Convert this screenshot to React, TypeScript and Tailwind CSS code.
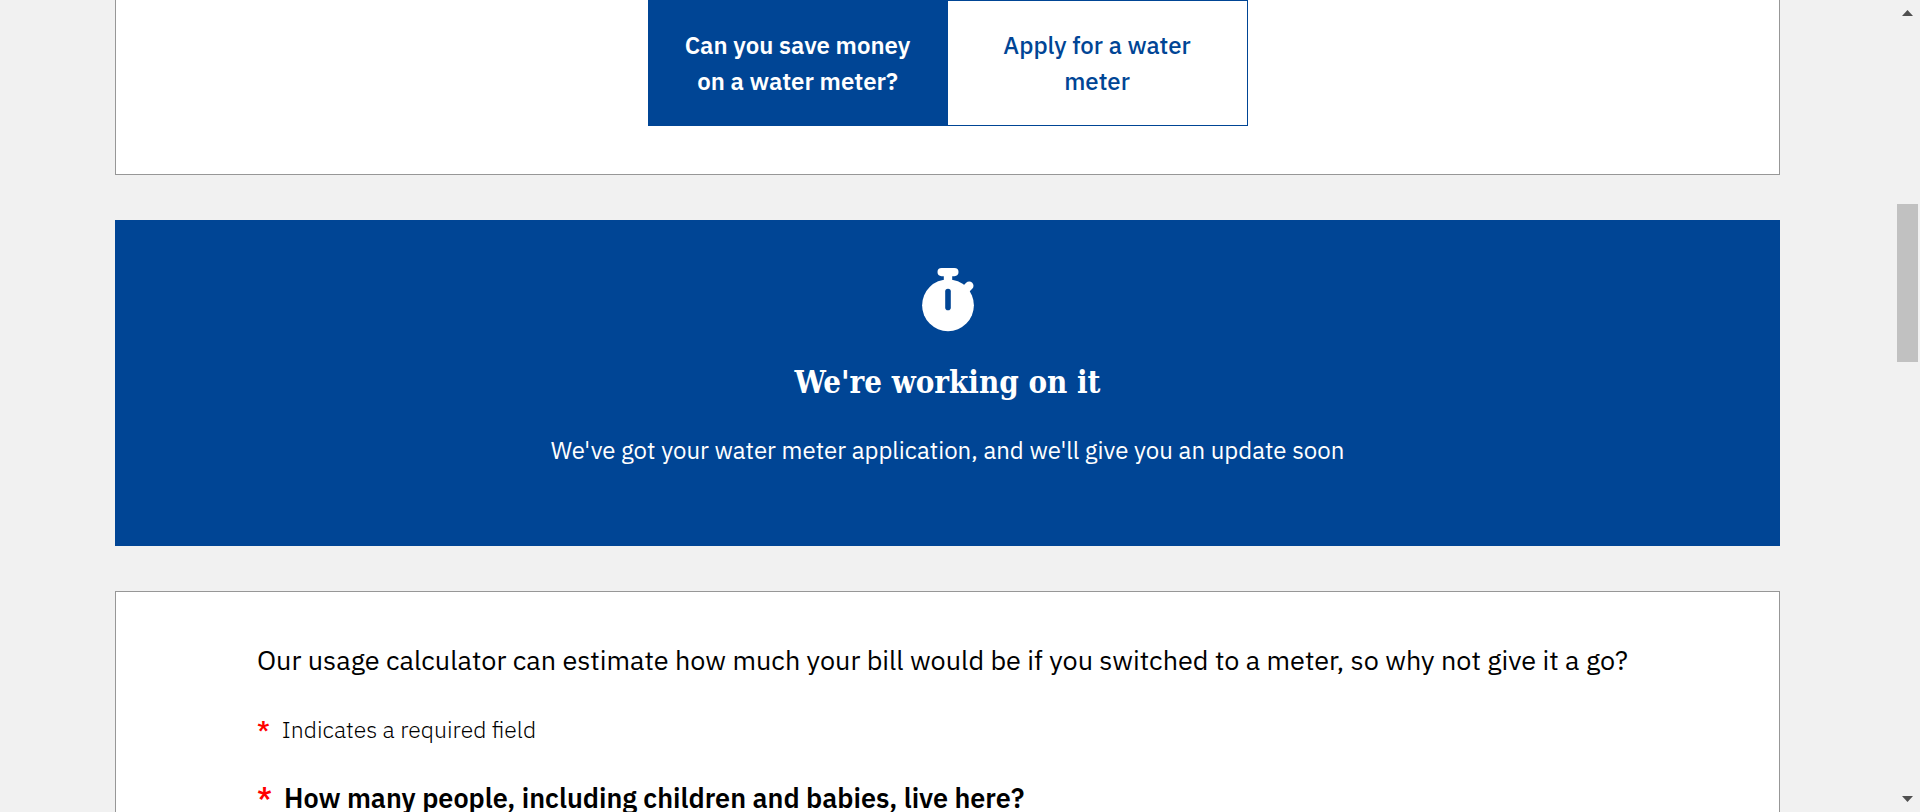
import React from "react";

function Stopwatch() {
  return (
    <svg viewBox="0 0 52 64" className="h-16 w-13" fill="#fff" aria-hidden="true">
      <rect x="15.5" y="0" width="21" height="8.2" rx="4.1" />
      <rect x="21.8" y="5" width="8.4" height="10" />
      <path d="M40 25 47.2 17.8" stroke="#fff" strokeWidth="8.6" strokeLinecap="round" />
      <circle cx="26" cy="37.3" r="25.9" />
      <rect x="23.2" y="20.7" width="5.6" height="21.5" rx="2.8" fill="#004595" />
    </svg>
  );
}

function Required() {
  return <span className="mr-3 font-semibold text-[#ff0000]">*</span>;
}

export default function App() {
  return (
    <div className="flex h-screen overflow-hidden bg-[#f1f1f1] font-['IBM_Plex_Sans',Roboto,'Liberation_Sans',sans-serif] text-black">
      <main className="flex min-w-0 flex-1 flex-col gap-[45px] px-[115px]">
        <section className="shrink-0 border border-t-0 border-[#979797] bg-white pb-12">
          <div className="mx-auto grid max-w-[600px] grid-cols-2 text-2xl leading-9">
            <button type="button" className="border border-[#004595] bg-[#004595] px-8 py-[26px] font-semibold text-white">
              Can you save money on a water meter?
            </button>
            <button type="button" className="border border-l-0 border-[#004595] bg-white px-8 py-[26px] font-medium text-[#004595]">
              Apply for a water meter
            </button>
          </div>
        </section>

        <section className="flex shrink-0 flex-col items-center bg-[#004595] px-8 pt-12 pb-[78px] text-center text-white">
          <Stopwatch />
          <h2 className="mt-7 font-['Roboto_Slab','DejaVu_Serif_Condensed','DejaVu_Serif',serif] text-[31px] leading-[44px] font-bold">
            We're working on it
          </h2>
          <p className="mt-7 text-2xl leading-9">
            We've got your water meter application, and we'll give you an update soon
          </p>
        </section>

        <section className="shrink-0 border border-[#979797] bg-white px-[141px] pt-12">
          <p className="text-[27px] leading-10">
            Our usage calculator can estimate how much your bill would be if you switched to a meter, so why not give it a go?
          </p>
          <p className="mt-8 text-[23px] leading-[34px] font-light">
            <Required />
            Indicates a required field
          </p>
          <p className="mt-8 text-[27px] leading-10 font-semibold">
            <Required />
            How many people, including children and babies, live here?
          </p>
        </section>
      </main>

      <div className="flex w-[25px] shrink-0 flex-col items-center bg-[#f1f1f1] py-[10px]" aria-hidden="true">
        <svg viewBox="0 0 11 6" className="h-[6px] w-[11px]" fill="#505050"><path d="M0 6 5.5 0 11 6Z" /></svg>
        <div className="mt-[188px] h-[158px] w-[21px] bg-[#c1c1c1]" />
        <svg viewBox="0 0 11 6" className="mt-auto h-[6px] w-[11px]" fill="#505050"><path d="M0 0H11L5.5 6Z" /></svg>
      </div>
    </div>
  );
}
